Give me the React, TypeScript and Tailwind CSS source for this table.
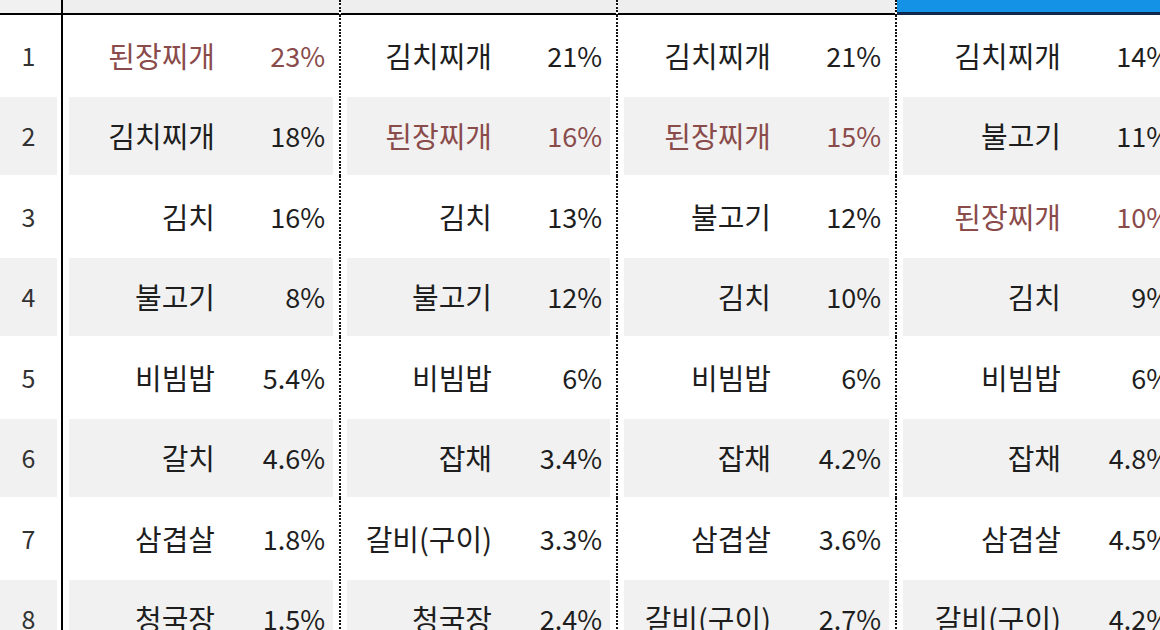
type Entry = { name: string; pct: string; hl?: boolean };

const rows: Entry[][] = [
  [
    { name: "된장찌개", pct: "23%", hl: true },
    { name: "김치찌개", pct: "21%" },
    { name: "김치찌개", pct: "21%" },
    { name: "김치찌개", pct: "14%" },
  ],
  [
    { name: "김치찌개", pct: "18%" },
    { name: "된장찌개", pct: "16%", hl: true },
    { name: "된장찌개", pct: "15%", hl: true },
    { name: "불고기", pct: "11%" },
  ],
  [
    { name: "김치", pct: "16%" },
    { name: "김치", pct: "13%" },
    { name: "불고기", pct: "12%" },
    { name: "된장찌개", pct: "10%", hl: true },
  ],
  [
    { name: "불고기", pct: "8%" },
    { name: "불고기", pct: "12%" },
    { name: "김치", pct: "10%" },
    { name: "김치", pct: "9%" },
  ],
  [
    { name: "비빔밥", pct: "5.4%" },
    { name: "비빔밥", pct: "6%" },
    { name: "비빔밥", pct: "6%" },
    { name: "비빔밥", pct: "6%" },
  ],
  [
    { name: "갈치", pct: "4.6%" },
    { name: "잡채", pct: "3.4%" },
    { name: "잡채", pct: "4.2%" },
    { name: "잡채", pct: "4.8%" },
  ],
  [
    { name: "삼겹살", pct: "1.8%" },
    { name: "갈비(구이)", pct: "3.3%" },
    { name: "삼겹살", pct: "3.6%" },
    { name: "삼겹살", pct: "4.5%" },
  ],
  [
    { name: "청국장", pct: "1.5%" },
    { name: "청국장", pct: "2.4%" },
    { name: "갈비(구이)", pct: "2.7%" },
    { name: "갈비(구이)", pct: "4.2%" },
  ],
];

// widths of the four survey columns (last one runs off the edge)
const groupWidths = ["w-[276px]", "w-[275px]", "w-[277px]", "w-[288px]"];

// heavy dotted separator like the sheet's dotted cell border
const Dots = () => (
  <div className="w-[2px] shrink-0 self-stretch bg-[repeating-linear-gradient(to_bottom,#111_0px,#111_2px,transparent_2px,transparent_3.4px)]" />
);

const App = () => {
  return (
    <div
      className="w-[1160px] h-[630px] overflow-hidden bg-white"
      style={{ fontFamily: '"Noto Sans CJK KR", "Noto Sans", sans-serif' }}
    >
      {/* Header strip */}
      <div className="flex h-[15px]">
        <div className="w-[63px] shrink-0 bg-[#f1f1f1] border-r-2 border-b-2 border-black" />
        {groupWidths.slice(0, 3).map((w, j) => (
          <div key={j} className="flex shrink-0">
            <div className={`${w} shrink-0 bg-[#eeeeee] border-b-2 border-black`} />
            <Dots />
          </div>
        ))}
        <div className="w-[288px] shrink-0 bg-[#1492e6] border-b-[3px] border-[#12284a]" />
      </div>

      {/* Ranking rows */}
      {rows.map((row, i) => {
        const band = i % 2 === 1 ? "bg-[#f1f1f1]" : "bg-white";
        return (
          <div key={i} className="flex h-[80.5px]">
            <div className="w-[63px] shrink-0 border-r-2 border-black pr-[4px] py-[1px]">
              <div
                className={`h-full flex items-center justify-center text-[25px] leading-none text-[#333333] ${band}`}
              >
                {i + 1}
              </div>
            </div>
            {row.map((e, j) => (
              <div key={j} className="flex shrink-0">
                <div className={`${groupWidths[j]} shrink-0 px-[6px] py-[1px]`}>
                  <div
                    className={`h-full flex items-center leading-none ${band} ${
                      e.hl ? "text-[#8a4b4b]" : "text-[#1e1e1e]"
                    }`}
                  >
                    <div className="flex-1 text-right pr-[8px] text-[29px] whitespace-nowrap">
                      {e.name}
                    </div>
                    <div className="w-[110px] shrink-0 text-right pr-[8px] text-[27px] whitespace-nowrap">
                      {e.pct}
                    </div>
                  </div>
                </div>
                {j < 3 && <Dots />}
              </div>
            ))}
          </div>
        );
      })}
    </div>
  );
};

export default App;
